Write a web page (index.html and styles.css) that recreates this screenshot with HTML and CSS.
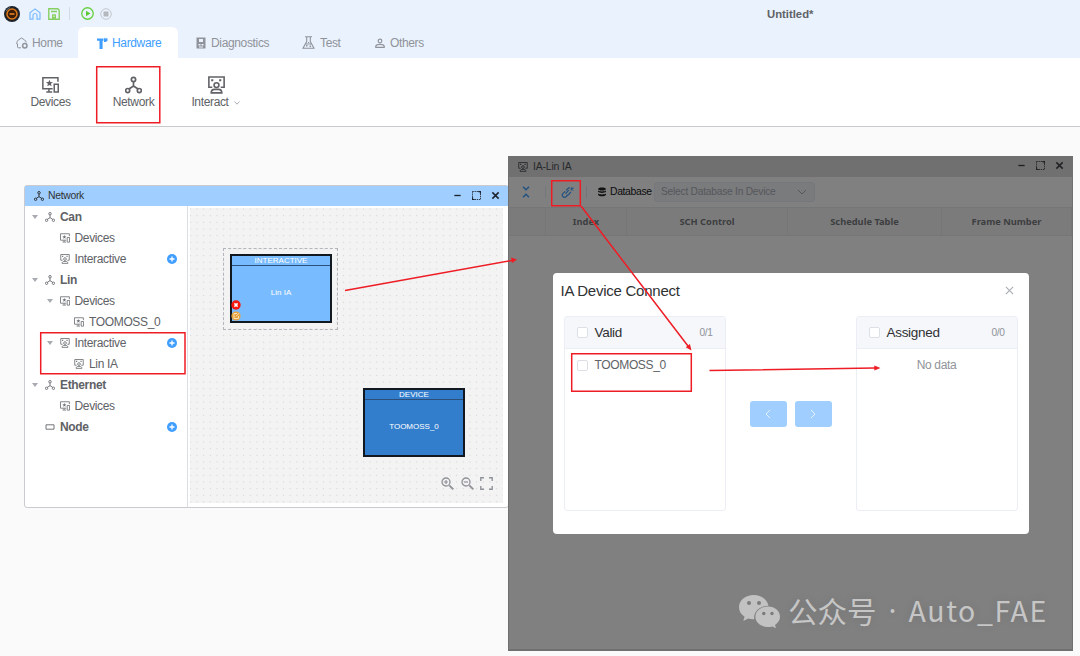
FILE: index.html
```html
<!DOCTYPE html>
<html lang="en">
<head>
    <meta charset="UTF-8">
    <meta name="viewport" content="width=device-width, initial-scale=1.0">
    <title>Untitled*</title>
    <link rel="stylesheet" href="styles.css">
</head>
<body>
    <!-- shared icons -->
    <svg class="sprite">
        <symbol id="i-network" viewBox="0 0 16 16"><g fill="none" stroke="currentColor" stroke-width="1.6"><circle cx="8" cy="2.8" r="2"/><circle cx="2.5" cy="13.2" r="1.9"/><circle cx="13.5" cy="13.2" r="1.9"/><path d="M8 4.8v4.2M8 9l-4.3 2.8M8 9l4.3 2.8"/></g></symbol>
        <symbol id="i-devices" viewBox="0 0 16 16"><path fill="none" stroke="currentColor" stroke-width="1.4" d="M15 5V1.2H.8v10.300H10M6.500 11.500V14.300M4 14.500h5.600M11.500 7.200h3.800v7.400h-3.800z"/><path fill="currentColor" d="M7 3l.9 2.200 2.400.1-1.900 1.500.7 2.400L7 7.900 4.900 9.200l.7-2.400-1.900-1.500 2.400-.1z"/></symbol>
        <symbol id="i-interact" viewBox="0 0 16 17"><g fill="none" stroke="currentColor" stroke-width="1.5"><path d="M4 10.600H.8V.9h14.400v9.700H12"/><circle cx="8" cy="8.600" r="2.300"/><path d="M3 15.900c0-2 1.500-3.300 3.200-3.300h3.600c1.700 0 3.200 1.300 3.200 3.300z"/></g><path fill="currentColor" d="M3 3h2v2H3zM10.500 3h2v2h-2z"/></symbol>
        <symbol id="i-max" viewBox="0 0 10 10"><path fill="none" stroke="currentColor" stroke-dasharray="1.500 .8" d="M.5.5h9v9h-9z"/><path fill="none" stroke="currentColor" stroke-width="1.300" d="M7 .6h2.400V3M.6 7v2.400H3"/></symbol>
        <symbol id="i-close" viewBox="0 0 10 10"><path fill="none" stroke="currentColor" stroke-width="1.700" d="M1.500 1.500l7 7M8.500 1.500l-7 7"/></symbol>
        <symbol id="i-min" viewBox="0 0 10 10"><path fill="none" stroke="currentColor" stroke-width="1.500" d="M1.500 5h7"/></symbol>
        <symbol id="i-plus" viewBox="0 0 10 10"><circle cx="5" cy="5" r="5" fill="#409eff"/><path stroke="#fff" stroke-width="1.300" d="M2.500 5h5M5 2.500v5"/></symbol>
    </svg>

    <header class="header">
        <div class="quickbar">
            <svg class="logo" viewBox="0 0 16 16"><circle cx="8" cy="8" r="8" fill="#1d2328"/><circle cx="8" cy="8" r="5" fill="#3a1c08" stroke="#e07818" stroke-width="1.500"/><path d="M5.500 8h5" stroke="#f08a24" stroke-width="1.500"/><path d="M2 5a7 7 0 0 1 4-3.500" fill="none" stroke="#587080"/></svg>
            <svg class="q-home" viewBox="0 0 12 12"><path d="M4 11.200H1V4.800L6 .9l5 3.900v6.400H8V7.500a2 2 0 0 0-4 0z" fill="none" stroke="#79bbff" stroke-width="1.200"/></svg>
            <svg class="q-save" viewBox="0 0 12 12"><path d="M.8.8h9l1.400 1.500v8.900H.8zM3 3.500h6" fill="none" stroke="#85d060" stroke-width="1.400"/><path d="M4 6.300h4v4.500H4z" fill="#85d060"/><path d="M5.500 7.500h1v1.500h-1z" fill="#fff"/></svg>
            <span class="q-sep"></span>
            <svg class="q-run" viewBox="0 0 12 12"><circle cx="6" cy="6" r="5.300" fill="none" stroke="#67d040" stroke-width="1.200"/><path d="M4.600 3.500L8.700 6 4.600 8.500z" fill="#5cc935"/></svg>
            <svg class="q-stop" viewBox="0 0 12 12"><circle cx="6" cy="6" r="5.300" fill="none" stroke="#c3c6cb"/><path d="M3.500 3.500h5v5h-5z" fill="#b5b8bd"/></svg>
            <span class="doc-title">Untitled*</span>
        </div>
        <nav class="tabs">
            <a class="tab tab-home"><svg viewBox="0 0 12 12"><path d="M5 10.800H2.500a1 1 0 0 1-1-1V7H.8c0-2 .4-3 1.500-4L5.500 1l3.200 2c.8.600 1.200 1.300 1.500 2.500" fill="none" stroke="currentColor"/><circle cx="8.800" cy="8.800" r="2.200" fill="none" stroke="currentColor" stroke-width="1.500"/></svg>Home</a>
            <a class="tab tab-hardware active"><svg viewBox="0 0 12 12"><path d="M1 1.500h6.500v2.300H1zM3.500 3.500h3.100V12H3.500zM8 1.500l1.300-1v1.300h1V.8l1.200.7v2.300L9.800 5H8z" fill="currentColor"/></svg>Hardware</a>
            <a class="tab tab-diag"><svg viewBox="0 0 12 12"><path fill="currentColor" fill-rule="evenodd" d="M1.500.5h9v11h-9zM4 2v3h4V2zM3.500 7v1.500h2V7zM6.500 7v1.500h2V7zM4 9.500v1h4v-1z"/></svg>Diagnostics</a>
            <a class="tab tab-test"><svg viewBox="0 0 13 13"><path d="M3 .7h7M4.700 1v4.500L1 12.200h11L8.300 5.500V1M3.500 8h6" fill="none" stroke="currentColor" stroke-width="1.100"/><path d="M4 9h1.500v1.500H4zM7.500 9.500H9V11H7.500zM6 6h1.200v1H6z" fill="currentColor"/></svg>Test</a>
            <a class="tab tab-others"><svg viewBox="0 0 12 12"><circle cx="6" cy="4" r="1.800" fill="none" stroke="currentColor" stroke-width="1.200"/><path d="M1.800 10.400V9C2.200 7.800 3.500 7.300 6 7.300s3.800.5 4.200 1.700v1.400z" fill="none" stroke="currentColor" stroke-width="1.200"/></svg>Others</a>
        </nav>
    </header>

    <section class="ribbon">
        <div class="tool"><svg><use href="#i-devices"/></svg><span>Devices</span></div>
        <div class="tool"><svg><use href="#i-network"/></svg><span>Network</span></div>
        <div class="tool tool-interact"><svg><use href="#i-interact"/></svg><span>Interact <svg class="chev" viewBox="0 0 6 6"><path d="M.5 1.500L3 4.200l2.500-2.700" fill="none" stroke="#a8abb2"/></svg></span></div>
    </section>

    <!-- Network window -->
    <section class="window net-window">
        <div class="titlebar">
            <svg><use href="#i-network"/></svg><span>Network</span>
            <div class="win-buttons"><svg><use href="#i-min"/></svg><svg><use href="#i-max"/></svg><svg><use href="#i-close"/></svg></div>
        </div>
        <div class="net-body">
            <ul class="tree">
                <li class="root"><i class="caret"></i><svg><use href="#i-network"/></svg><span>Can</span></li>
                <li class="l1"><i class="caret none"></i><svg><use href="#i-devices"/></svg><span>Devices</span></li>
                <li class="l1"><i class="caret none"></i><svg><use href="#i-interact"/></svg><span>Interactive</span><svg class="plus"><use href="#i-plus"/></svg></li>
                <li class="root"><i class="caret"></i><svg><use href="#i-network"/></svg><span>Lin</span></li>
                <li class="l1"><i class="caret"></i><svg><use href="#i-devices"/></svg><span>Devices</span></li>
                <li class="l2"><i class="caret none"></i><svg><use href="#i-devices"/></svg><span>TOOMOSS_0</span></li>
                <li class="l1"><i class="caret"></i><svg><use href="#i-interact"/></svg><span>Interactive</span><svg class="plus"><use href="#i-plus"/></svg></li>
                <li class="l2"><i class="caret none"></i><svg><use href="#i-interact"/></svg><span>Lin IA</span></li>
                <li class="root"><i class="caret"></i><svg><use href="#i-network"/></svg><span>Ethernet</span></li>
                <li class="l1"><i class="caret none"></i><svg><use href="#i-devices"/></svg><span>Devices</span></li>
                <li class="root"><i class="caret none"></i><svg viewBox="0 0 10 10"><path d="M1 2.800h8v4.400H1z" fill="none" stroke="currentColor"/></svg><span>Node</span><svg class="plus"><use href="#i-plus"/></svg></li>
            </ul>
            <div class="canvas">
                <div class="selection"></div>
                <div class="node node-ia">
                    <div class="node-head">INTERACTIVE</div>
                    <div class="node-name">Lin IA</div>
                    <svg class="node-tools" viewBox="0 0 10 21"><circle cx="5" cy="5" r="4.700" fill="#f5180c"/><path d="M3.400 3.400l3.200 3.200M6.600 3.400L3.400 6.600" stroke="#fff" stroke-width="1.500"/><circle cx="5" cy="16" r="4.600" fill="#e6a23c"/><path d="M6 13.500H3v5h4.500V16M5 16.500l3-3.300" fill="none" stroke="#fbe6c4" stroke-width=".9"/></svg>
                </div>
                <div class="node node-device">
                    <div class="node-head">DEVICE</div>
                    <div class="node-name">TOOMOSS_0</div>
                </div>
                <div class="zoom-tools">
                    <svg viewBox="0 0 13 13"><path d="M8.300 8.300l4 4" stroke="currentColor" stroke-width="1.900"/><circle cx="5" cy="5" r="4" fill="none" stroke="currentColor" stroke-width="1.300"/><path d="M3 5h4M5 3v4" stroke="currentColor" stroke-width="1.200"/></svg>
                    <svg viewBox="0 0 13 13"><path d="M8.300 8.300l4 4" stroke="currentColor" stroke-width="1.900"/><circle cx="5" cy="5" r="4" fill="none" stroke="currentColor" stroke-width="1.300"/><path d="M3 5h4" stroke="currentColor" stroke-width="1.200"/></svg>
                    <svg viewBox="0 0 13 13"><path d="M.8 4V.8H4M9 .8h3.200V4M12.200 9v3.200H9M4 12.200H.8V9" fill="none" stroke="currentColor" stroke-width="1.400"/></svg>
                </div>
            </div>
        </div>
    </section>

    <!-- IA window, dimmed under the dialog -->
    <section class="window ia-window">
        <div class="titlebar">
            <svg><use href="#i-interact"/></svg><span>IA-Lin IA</span>
            <div class="win-buttons"><svg><use href="#i-min"/></svg><svg><use href="#i-max"/></svg><svg><use href="#i-close"/></svg></div>
        </div>
        <div class="ia-toolbar">
            <svg class="t-fold" viewBox="0 0 8 12"><path d="M1 .7l3 3 3-3M1 11.300l3-3 3 3" fill="none" stroke="currentColor" stroke-width="1.400"/></svg>
            <span class="t-sep"></span>
            <svg class="t-link" viewBox="0 0 13 12"><path d="M4.600 7.600l3.200-3.400M5.200 4.300L6.800 2.600a2.200 2.200 0 0 1 2-.7M9.800 6L7.900 8.300a2.200 2.200 0 0 1-2.500.7M4.200 5.300L1.900 7.600a2.200 2.200 0 0 0 3 3.200l1.500-1.300" fill="none" stroke="currentColor" stroke-width="1.200"/><path d="M9.800 1.700l2.600 2.600M12.400 1.700L9.800 4.300" stroke="currentColor" stroke-width="1.200"/></svg>
            <span class="t-sep"></span>
            <svg class="t-db" viewBox="0 0 10 10"><path fill="currentColor" d="M5 .5C2.500.5 1 1.200 1 2s1.500 1.500 4 1.500S9 2.800 9 2 7.500.5 5 .5zM1 3.600v1.200c1.500 1.500 6.500 1.500 8 0V3.600c-1.500 1.200-6.500 1.200-8 0zM1 6.500v1.300C2.500 9.800 7.500 9.800 9 7.800V6.500c-1.500 1.200-6.500 1.200-8 0z"/></svg>
            <span class="t-label">Database</span>
            <div class="select"><span>Select Database In Device</span><svg viewBox="0 0 10 6"><path d="M1 1l4 4 4-4" fill="none" stroke="currentColor"/></svg></div>
        </div>
        <div class="ia-columns">
            <span></span><span>Index</span><span>SCH Control</span><span>Schedule Table</span><span>Frame Number</span>
        </div>
    </section>

    <!-- IA Device Connect dialog -->
    <section class="dialog">
        <div class="dialog-head"><span>IA Device Connect</span><svg viewBox="0 0 10 10"><path d="M1 1l8 8M9 1L1 9" fill="none" stroke="#a8abb2" stroke-width="1.200"/></svg></div>
        <div class="transfer">
            <div class="panel">
                <div class="panel-head"><i class="check"></i><span class="panel-title">Valid</span><span class="count">0/1</span></div>
                <div class="panel-item"><i class="check"></i><span>TOOMOSS_0</span></div>
            </div>
            <div class="transfer-buttons">
                <button><svg viewBox="0 0 8 10"><path d="M6 1L2 5l4 4" fill="none" stroke="#e3f1ff"/></svg></button>
                <button><svg viewBox="0 0 8 10"><path d="M2 1l4 4-4 4" fill="none" stroke="#e3f1ff"/></svg></button>
            </div>
            <div class="panel">
                <div class="panel-head"><i class="check"></i><span class="panel-title">Assigned</span><span class="count">0/0</span></div>
                <div class="panel-empty">No data</div>
            </div>
        </div>
    </section>

    <div class="watermark">
        <svg viewBox="0 0 41 33"><path fill="#c2c2c2" d="M15 0C6.500 0 0 5.400 0 12.300c0 4 2.100 7.200 5.600 9.500L4.300 26l5-2.500c2 .6 4 .8 6 .7C14 17 21 10.500 29.500 10.700 28.200 4.500 22 0 15 0z"/><path fill="#c2c2c2" d="M29 11.500c-7 0-12.600 4.600-12.600 10.300S22 32 29 32c1.500 0 3-.2 4.300-.6l3.700 1.800-1-3.300c3-2 5-4.700 5-8.100 0-5.700-5-10.300-12-10.300z"/><g fill="#7b7b7b"><circle cx="10" cy="8" r="2"/><circle cx="20" cy="8" r="2"/><circle cx="24.800" cy="18.500" r="1.700"/><circle cx="33" cy="18.500" r="1.700"/></g></svg>
        <span class="wm-cn">公众号</span><span class="wm-dot">·</span><span class="wm-name">Auto_FAE</span>
    </div>

    <!-- red annotations -->
    <svg class="marks" viewBox="0 0 1080 656">
        <g fill="none" stroke="#ee1c25" stroke-width="1.500">
            <path d="M96.700 66.700h63.100v56.100H96.700zM40.700 332.700h144.300v41H40.700zM551.700 180.700h28.600v25H551.700zM571.700 353.700h119.600v37.600H571.700z"/>
            <path d="M345 290.500L512 260.500M581 206L688 346M709.500 370.500L875 368"/>
        </g>
        <path fill="#ee1c25" d="M517 259.500l-6-2 1 5.400zM691.500 350.500l-1.600-6.500-4.200 3.200zM880.500 368l-6.200-2.600v5.200z"/>
    </svg>
</body>
</html>
```

FILE: styles.css
```css
* { box-sizing: border-box; }
body { margin: 0; width: 1080px; height: 656px; overflow: hidden; position: relative; background: #fafafa; font-family: "Liberation Sans", Arial, sans-serif; font-size: 12px; letter-spacing: -.35px; color: #606266; }
svg { display: block; flex: none; }
.sprite { display: none; }

/* header */
.header { height: 58px; background: #eaf2fe; }
.quickbar { height: 27px; display: flex; align-items: center; padding-left: 4px; }
.logo { width: 16px; height: 16px; margin-right: 9px; }
.q-home { width: 12px; height: 12px; margin-right: 7px; }
.q-save { width: 12px; height: 12px; margin-right: 9px; }
.q-sep { width: 1px; height: 13px; background: #d5dbe5; margin-right: 11px; }
.q-run { width: 13px; height: 13px; margin-right: 6px; }
.q-stop { width: 12px; height: 12px; }
.doc-title { margin-left: 655px; font-size: 11.3px; letter-spacing: 0; font-weight: bold; }
.tabs { display: flex; height: 31px; color: #909399; }
.tab { display: flex; align-items: center; gap: 5px; border-radius: 6px 6px 0 0; }
.tab svg { width: 12px; height: 12px; }
.tab-home { width: 78px; padding-left: 16px; gap: 4px; }
.tab-hardware { width: 100px; padding-left: 18px; }
.tab-hardware svg { margin-right: -1px; }
.tab.active { background: #fff; color: #409eff; }
.tab-diag { width: 124px; padding-left: 17px; gap: 4px; }
.tab-test { width: 72px; }
.tab-test svg { width: 13px; height: 13px; }
.tab-others { gap: 4px; }

.ribbon { display: flex; height: 69px; background: #fff; border-bottom: 1px solid #c8c9cc; padding: 18px 0 0 9px; }
.tool { width: 83px; display: flex; flex-direction: column; align-items: center; gap: 2px; line-height: 13px; }
.tool > svg { width: 17px; height: 18px; color: #606266; }
.tool span { display: flex; align-items: center; }
.tool-interact span { margin-left: -6px; }
.tool .chev { width: 6px; height: 6px; margin-left: 5px; margin-right: -4px; }

/* windows */
.window { position: absolute; }
.titlebar { display: flex; align-items: center; font-size: 10.400px; letter-spacing: -.3px; color: #303133; }
.titlebar > svg { width: 10px; height: 10px; margin-right: 4px; }
.titlebar > span { margin-bottom: 1px; }
.win-buttons { display: flex; gap: 10px; margin-left: auto; color: #1d2430; }
.win-buttons svg { width: 9px; height: 9px; }

.net-window { left: 24px; top: 185px; width: 485px; height: 323px; background: #fff; border: 1px solid #c9cbd0; border-radius: 3px; }
.net-window .titlebar { height: 20px; background: #a0cfff; padding: 0 8px 0 9px; }
.net-window .win-buttons { margin-bottom: 2px; }
.net-body { display: flex; height: 301px; }
.tree { width: 163px; margin: 0; padding: 0; list-style: none; border-right: 1px solid #dcdfe6; }
.tree li { display: flex; align-items: center; height: 21px; padding-left: 7px; }
.tree .l1 { padding-left: 21.5px; }
.tree .l2 { padding-left: 36px; }
.tree .root span { font-weight: bold; }
.tree li > svg { width: 10px; height: 10px; margin-right: 5px; color: #73767a; }
.tree li > .plus { margin: 0 10px 0 auto; }
.caret { width: 6px; border: 3px solid transparent; border-top: 4px solid #a8abb2; border-bottom: 0; margin-right: 7px; }
.caret.none { visibility: hidden; }

.canvas { position: relative; width: 313px; height: 295px; margin: 2px 0 0 2px; background-color: #f3f3f3; background-image: radial-gradient(circle, #d6d6d6 .6px, transparent 1px); background-size: 6.670px 6.670px; background-position: 3.700px -2.300px; }
.selection { position: absolute; left: 33px; top: 40px; width: 115px; height: 82px; border: 1px dashed #b4b6bb; }
.node { position: absolute; width: 102px; height: 69px; border: 2px solid #111820; color: #fff; font-size: 8px; letter-spacing: 0; text-align: center; display: flex; flex-direction: column; }
.node-head { height: 10px; line-height: 9px; border-bottom: 1px solid #2b4f78; }
.node-name { flex: 1; display: flex; align-items: center; justify-content: center; padding-bottom: 3px; }
.node-ia { left: 40px; top: 46px; background: #79bbff; }
.node-device { left: 173px; top: 180px; background: #337ecc; }
.node-tools { position: absolute; left: -1px; bottom: 0; width: 10px; height: 21px; }
.zoom-tools { position: absolute; right: 10px; bottom: 13px; display: flex; gap: 6.500px; color: #909399; }
.zoom-tools svg { width: 13px; height: 13px; }

.ia-window { left: 508px; top: 156px; width: 565px; height: 495px; background: #808080; border: 1px solid #707070; border-bottom-width: 2px; }
.ia-window .titlebar { height: 20px; background: #707070; color: #27292c; padding: 0 8px 0 9px; letter-spacing: -.15px; }
.ia-window .titlebar > svg { margin-right: 5px; }
.ia-window .win-buttons { color: #202225; margin-bottom: 3px; }
.ia-toolbar { display: flex; align-items: center; height: 30px; padding: 0 0 1px 13px; color: #205080; }
.t-fold { width: 8px; height: 12px; margin-right: 15px; }
.t-sep { width: 1px; height: 12px; background: #73767a; }
.t-link { width: 13px; height: 12px; margin: 0 12px 0 15px; }
.t-db { width: 10px; height: 10px; margin: 0 3px 0 10px; color: #111; }
.t-label { color: #0c0c0c; font-size: 10.400px; letter-spacing: -.35px; width: 44px; }
.select { display: flex; align-items: center; justify-content: space-between; width: 161px; height: 20px; padding: 0 7px 0 6px; border: 1px solid #75777c; border-radius: 3px; background: #7a7b7d; color: #55575b; font-size: 10.200px; letter-spacing: -.22px; }
.select svg { width: 10px; height: 6px; }
.ia-columns { display: grid; grid-template-columns: 37px 81px 161px 154px 1fr; height: 29px; background: #7b7b7c; border: solid #757678; border-width: 1px 0; font-family: "Noto Sans", sans-serif; font-size: 9.300px; letter-spacing: 0; font-weight: bold; color: #3d3e40; }
.ia-columns span { display: flex; align-items: center; justify-content: center; border-right: 1px solid #757678; }

/* dialog */
.dialog { position: absolute; left: 552.500px; top: 273px; width: 476px; height: 261px; padding: 0 11px; background: #fff; border-radius: 4px; }
.dialog-head { display: flex; justify-content: space-between; align-items: center; height: 43px; padding: 0 4px 8px 0; margin-left: -3px; font-size: 15px; letter-spacing: -.25px; color: #303133; }
.dialog-head svg { width: 9px; height: 9px; }
.transfer { display: flex; justify-content: space-between; align-items: center; height: 195px; }
.panel { width: 162px; height: 195px; border: 1px solid #ebeef5; border-radius: 3px; }
.panel-head { display: flex; align-items: center; height: 32px; padding: 0 12px; background: #f5f7fa; border-bottom: 1px solid #ebeef5; }
.check { width: 11px; height: 11px; border: 1px solid #dcdfe6; border-radius: 2px; background: #fff; margin-right: 7px; }
.panel-title { font-size: 13.500px; letter-spacing: -.3px; color: #303133; }
.count { margin-left: auto; font-size: 10.200px; color: #909399; }
.panel-item { display: flex; align-items: center; height: 24px; margin-top: 4px; padding-left: 12px; }
.panel-empty { margin-top: 4px; line-height: 24px; text-align: center; color: #909399; }
.transfer-buttons { display: flex; gap: 8px; }
.transfer-buttons button { display: flex; align-items: center; justify-content: center; width: 37px; height: 26px; padding: 0; border: 0; border-radius: 3px; background: #a0cfff; }
.transfer-buttons svg { width: 8px; height: 10px; }

.watermark { position: absolute; left: 739px; top: 591px; height: 40px; display: flex; align-items: center; color: #c6c6c6; font-family: "Noto Sans CJK SC", sans-serif; font-size: 29.500px; letter-spacing: 0; line-height: 40px; white-space: nowrap; text-shadow: 0 0 10px rgba(0, 0, 0, .12); }
.watermark svg { width: 41px; height: 33px; margin-right: 8px; }
.watermark span { margin-top: -3px; }
.wm-dot { width: 32px; text-align: center; font-family: "Noto Sans", sans-serif; }
.wm-name { font-size: 28.500px; letter-spacing: 1.600px; }

.marks { position: absolute; left: 0; top: 0; width: 1080px; height: 656px; pointer-events: none; }
```
